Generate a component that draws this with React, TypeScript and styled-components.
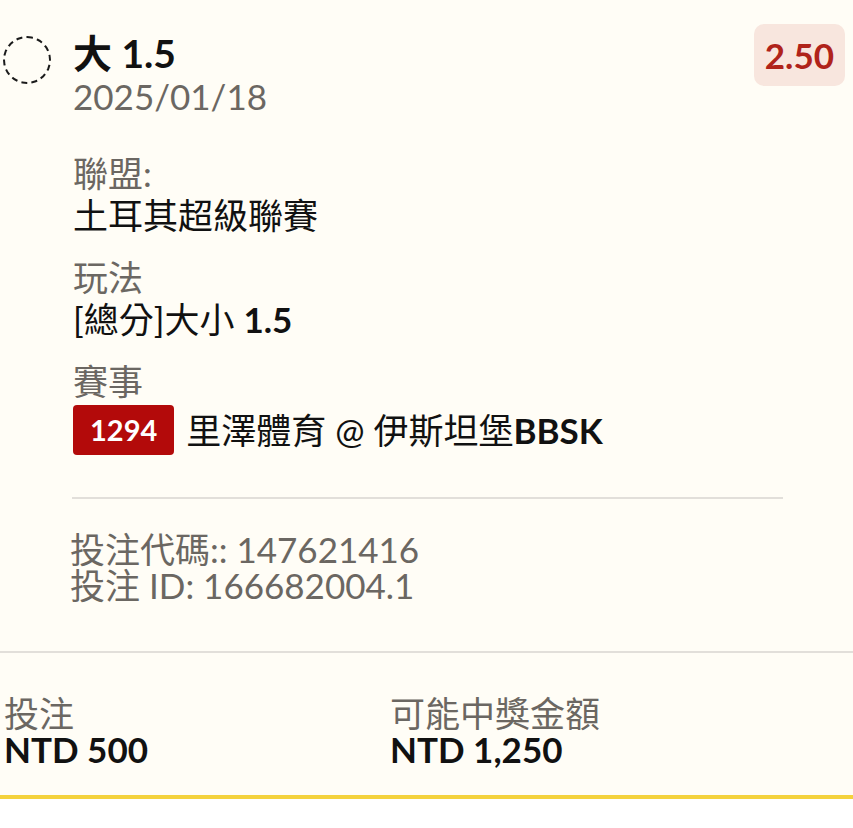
import React from "react";
import styled, { createGlobalStyle } from "styled-components";

const Global = createGlobalStyle`
  html, body { margin: 0; padding: 0; background: #ffffff; }
  body { font-family: Lato, "Noto Sans CJK TC", sans-serif; }
`;

const Card = styled.div`
  width: 853px;
  background: #fffdf6;
  border-bottom: 4px solid #f4d23c;
  font-family: Lato, "Noto Sans CJK TC", sans-serif;
`;

const Top = styled.div`
  display: flex;
  align-items: flex-start;
  padding: 24px 8px 0 3px;
`;

const Radio = styled.div`
  width: 44px;
  height: 44px;
  border: 2px dashed #1a1a1a;
  border-radius: 50%;
  margin-top: 12px;
  flex: none;
`;

const Body = styled.div`
  flex: 1;
  margin-left: 22px;
  padding-top: 7px;
`;

const Title = styled.div`
  font-size: 39px;
  font-weight: 700;
  color: #111;
  line-height: 44px;
`;

const DateText = styled.div`
  font-size: 35px;
  color: #6b6762;
  line-height: 42px;
`;

const Odds = styled.div`
  flex: none;
  background: #f8e6de;
  color: #b0231a;
  font-weight: 700;
  font-size: 35px;
  border-radius: 10px;
  padding: 10px 11px;
  line-height: 42px;
`;

const Field = styled.div<{ $first?: boolean }>`
  margin-top: ${(p) => (p.$first ? "35px" : "20px")};
`;

const Label = styled.div`
  font-size: 35px;
  color: #6b6762;
  line-height: 42px;
`;

const Value = styled.div`
  font-size: 35px;
  color: #111;
  line-height: 42px;
  display: flex;
  align-items: center;
  gap: 12px;
`;

const Num = styled.b`
  font-weight: 700;
`;

const Badge = styled.span`
  background: #b30a0a;
  color: #fff;
  font-weight: 700;
  font-size: 29px;
  line-height: 50px;
  padding: 0 17px;
  margin: 3px 0;
  border-radius: 4px;
`;

const Divider = styled.div`
  margin: 39px 70px 0 72px;
  height: 2px;
  background: #e2dfda;
`;

const Codes = styled.div`
  padding: 32px 0 48px 70px;
  font-size: 35px;
  color: #6b6762;
  line-height: 36px;
`;

const Footer = styled.div`
  border-top: 2px solid #e2dfda;
  display: grid;
  grid-template-columns: 386px 1fr;
  padding: 42px 4px 28px;
`;

const Col = styled.div``;

const FLabel = styled.div`
  font-size: 35px;
  color: #6b6762;
  line-height: 36px;
`;

const FValue = styled.div`
  font-size: 35px;
  font-weight: 700;
  color: #111;
  line-height: 36px;
`;

export default function App() {
  return (
    <>
      <Global />
      <Card>
        <Top>
          <Radio />
          <Body>
            <Title>大 1.5</Title>
            <DateText>2025/01/18</DateText>
            <Field $first>
              <Label>聯盟:</Label>
              <Value>土耳其超級聯賽</Value>
            </Field>
            <Field>
              <Label>玩法</Label>
              <Value>
                <span>
                  [總分]大小 <Num>1.5</Num>
                </span>
              </Value>
            </Field>
            <Field>
              <Label>賽事</Label>
              <Value>
                <Badge>1294</Badge>
                <span>
                  里澤體育 @ 伊斯坦堡<Num>BBSK</Num>
                </span>
              </Value>
            </Field>
          </Body>
          <Odds>2.50</Odds>
        </Top>
        <Divider />
        <Codes>
          <div>投注代碼:: 147621416</div>
          <div>投注 ID: 166682004.1</div>
        </Codes>
        <Footer>
          <Col>
            <FLabel>投注</FLabel>
            <FValue>NTD 500</FValue>
          </Col>
          <Col>
            <FLabel>可能中獎金額</FLabel>
            <FValue>NTD 1,250</FValue>
          </Col>
        </Footer>
      </Card>
    </>
  );
}
